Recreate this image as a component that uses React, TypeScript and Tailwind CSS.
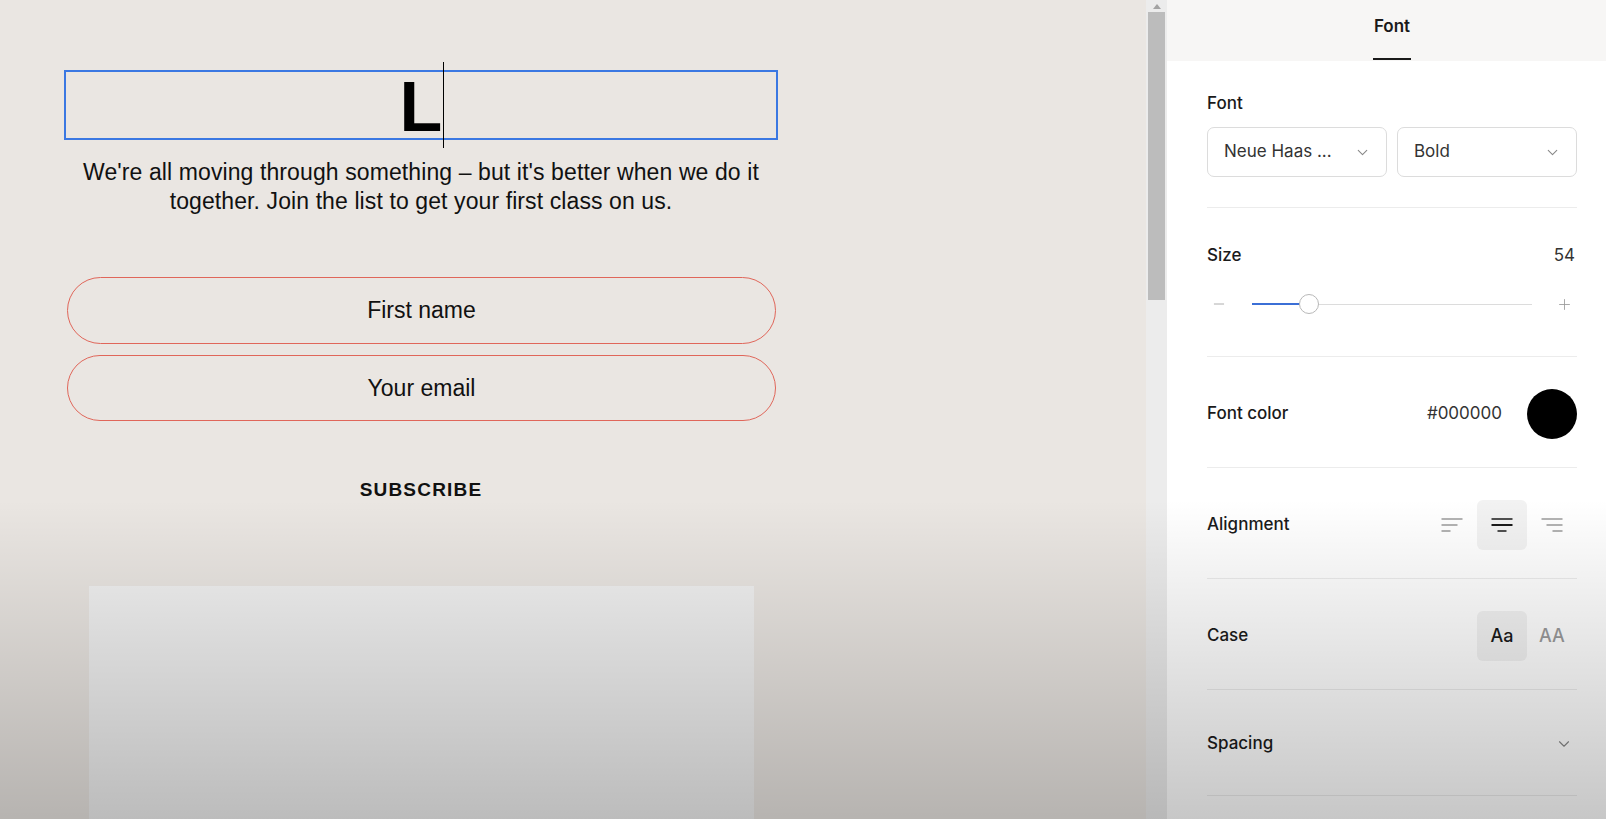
import { ChevronDown, Minus, Plus } from "lucide-react";

function AlignIcon({ kind, active }: { kind: "left" | "center" | "right"; active?: boolean }) {
  const c = active ? "#1a1a1a" : "#9a9a9a";
  const rows =
    kind === "left"
      ? [[0, 21], [0, 16], [0, 9]]
      : kind === "center"
        ? [[0, 21], [0, 21], [6, 15]]
        : [[0, 21], [5, 21], [11, 21]];
  return (
    <svg width="22" height="16" viewBox="0 0 22 16" fill="none">
      {rows.map(([a, b], i) => (
        <line
          key={i}
          x1={a + 0.5}
          x2={b + 0.5}
          y1={2 + i * 6}
          y2={2 + i * 6}
          stroke={c}
          strokeWidth={active && i === 1 ? 2 : 1.5}
        />
      ))}
    </svg>
  );
}

function Canvas() {
  return (
    <div className="w-[1146px] h-full bg-[#eae6e2] shrink-0 flex flex-col" style={{ fontFamily: '"Liberation Sans", Arial, sans-serif' }}>
      {/* Heading being edited */}
      <div className="ml-[64px] mt-[70px] w-[714px] h-[70px] border-2 border-[#3b78e2] flex items-center justify-center">
        <span className="relative text-[70px] font-bold leading-none text-black pt-[4px]">
          L
          <span className="absolute right-[-2px] top-[-6px] h-[86px] w-px bg-black" />
        </span>
      </div>

      <p className="ml-[64px] mt-[18px] w-[714px] text-center text-[23px] leading-[29px] tracking-[0.1px] text-[#111]">
        We're all moving through something – but it's better when we do it
        <br />
        together. Join the list to get your first class on us.
      </p>

      {/* Form */}
      <div className="ml-[67px] mt-[61px] w-[709px] flex flex-col gap-[11px]">
        <div className="h-[67px] rounded-full border-[1.5px] border-[#e0665a] flex items-center justify-center text-[23px] text-[#111]">
          First name
        </div>
        <div className="h-[66px] rounded-full border-[1.5px] border-[#e0665a] flex items-center justify-center text-[23px] text-[#111]">
          Your email
        </div>
      </div>

      <div className="ml-[64px] w-[714px] mt-[57px] h-[24px] flex items-center justify-center text-[19px] font-bold tracking-[1.2px] text-[#111]">
        SUBSCRIBE
      </div>

      <div className="ml-[89px] mt-[84px] w-[665px] flex-1 bg-[#f1f1f1]" />
    </div>
  );
}

function Scrollbar() {
  return (
    <div className="w-[21px] h-full shrink-0 bg-[#ececec] flex flex-col items-center">
      <div className="h-[12px] flex items-center">
        <div className="w-0 h-0 border-l-[4px] border-r-[4px] border-b-[5px] border-l-transparent border-r-transparent border-b-[#a3a3a3]" />
      </div>
      <div className="w-[17px] h-[288px] bg-[#bcbcbc]" />
    </div>
  );
}

function Row({ label, children }: { label: string; children: React.ReactNode }) {
  return (
    <div className="h-[111px] pt-[3px] flex items-center justify-between border-b border-[#ececec]">
      <span className="text-[17px] font-medium text-[#1a1a1a]">{label}</span>
      {children}
    </div>
  );
}

function Panel() {
  return (
    <div className="flex-1 h-full bg-white flex flex-col" style={{ fontFamily: "Inter, sans-serif" }}>
      {/* Tabs */}
      <div className="h-[61px] bg-[#f7f6f5] pl-[40px] pr-[29px] flex justify-center shrink-0">
        <div className="flex flex-col items-center justify-end">
          <span className="text-[17px] font-semibold text-[#1a1a1a] leading-none mb-[23px]">Font</span>
          <div className="h-[2px] w-[38px] bg-[#1a1a1a] mb-[1px]" />
        </div>
      </div>

      <div className="pl-[40px] pr-[29px] flex flex-col">
        {/* Font */}
        <div className="pt-[31px] pb-[30px] border-b border-[#ececec]">
          <div className="h-[24px] flex items-center text-[17px] font-medium text-[#1a1a1a]">Font</div>
          <div className="mt-[11px] flex gap-[10px]">
            <div className="w-[180px] h-[50px] rounded-[7px] border border-[#dcdcdc] flex items-center justify-between pl-[16px] pr-[15px]">
              <span className="text-[17px] text-[#333]">Neue Haas ...</span>
              <ChevronDown size={17} strokeWidth={1.5} className="text-[#888]" />
            </div>
            <div className="flex-1 h-[50px] rounded-[7px] border border-[#dcdcdc] flex items-center justify-between pl-[16px] pr-[15px]">
              <span className="text-[17px] text-[#333]">Bold</span>
              <ChevronDown size={17} strokeWidth={1.5} className="text-[#888]" />
            </div>
          </div>
        </div>

        {/* Size */}
        <div className="h-[149px] pt-[36px] border-b border-[#ececec]">
          <div className="h-[24px] flex items-center justify-between">
            <span className="text-[17px] font-medium text-[#1a1a1a]">Size</span>
            <span className="text-[17px] text-[#333] mr-[2px]">54</span>
          </div>
          <div className="mt-[26px] h-[20px] flex items-center">
            <Minus size={16} strokeWidth={1.2} className="text-[#999] ml-[4px]" />
            <div className="ml-[25px] w-[280px] relative h-[20px] flex items-center">
              <div className="w-full h-px bg-[#dcdcdc]" />
              <div className="absolute left-0 top-[9px] h-[2px] w-[48px] bg-[#3b6fd6]" />
              <div className="absolute left-[47px] top-0 w-[20px] h-[20px] rounded-full bg-white border border-[#b8b8b8]" />
            </div>
            <Plus size={17} strokeWidth={1.2} className="text-[#999] ml-[24px]" />
          </div>
        </div>

        <Row label="Font color">
          <div className="flex items-center gap-[25px]">
            <span className="text-[17px] text-[#333]">#000000</span>
            <div className="w-[50px] h-[50px] rounded-full bg-black" />
          </div>
        </Row>

        <Row label="Alignment">
          <div className="flex">
            <div className="w-[50px] h-[50px] flex items-center justify-center">
              <AlignIcon kind="left" />
            </div>
            <div className="w-[50px] h-[50px] rounded-[6px] bg-[#f2f2f2] flex items-center justify-center">
              <AlignIcon kind="center" active />
            </div>
            <div className="w-[50px] h-[50px] flex items-center justify-center">
              <AlignIcon kind="right" />
            </div>
          </div>
        </Row>

        <Row label="Case">
          <div className="flex">
            <div className="w-[50px] h-[50px] rounded-[6px] bg-[#f2f2f2] flex items-center justify-center text-[18px] font-medium text-[#1a1a1a]">
              Aa
            </div>
            <div className="w-[50px] h-[50px] flex items-center justify-center text-[18px] font-medium text-[#9a9a9a]">
              AA
            </div>
          </div>
        </Row>

        <div className="h-[106px] pt-[3px] flex items-center justify-between border-b border-[#ececec]">
          <span className="text-[17px] font-medium text-[#1a1a1a]">Spacing</span>
          <ChevronDown size={18} strokeWidth={1.5} className="text-[#888] mr-[4px]" />
        </div>
      </div>
    </div>
  );
}

export default function App() {
  return (
    <div className="relative w-[1606px] h-[819px] flex overflow-hidden">
      <Canvas />
      <Scrollbar />
      <Panel />
      {/* dim overlay toward the bottom of the frame */}
      <div className="pointer-events-none absolute inset-0 bg-[linear-gradient(to_bottom,transparent_61%,rgba(0,0,0,0.22)_100%)]" />
    </div>
  );
}
